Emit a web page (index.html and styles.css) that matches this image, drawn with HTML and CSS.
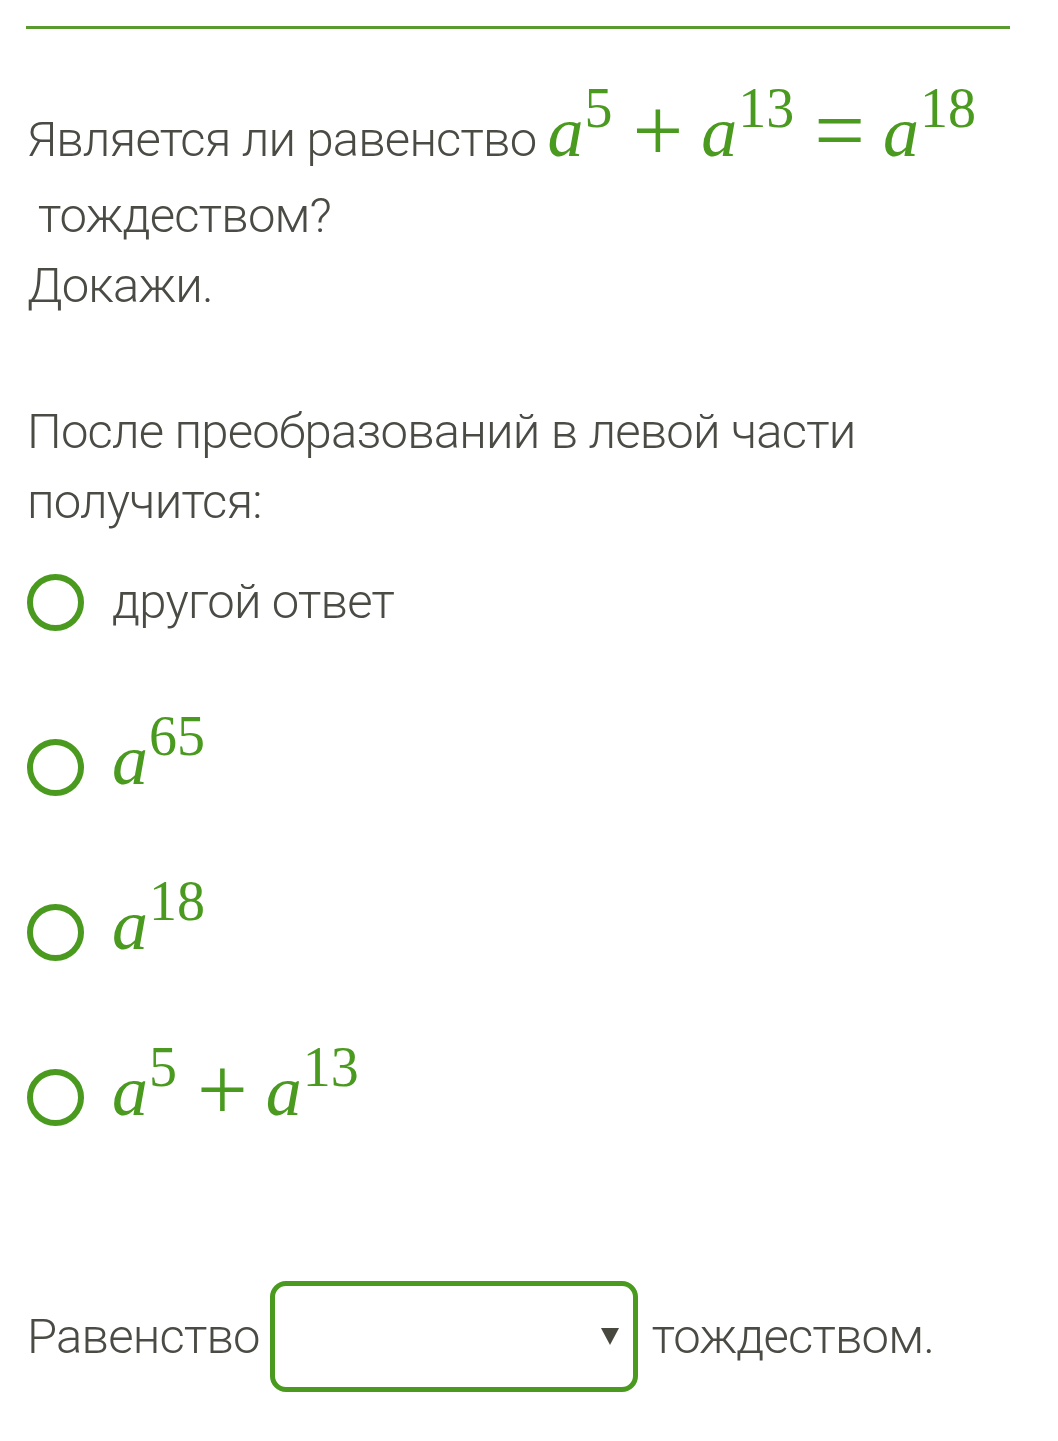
FILE: index.html
```html
<!DOCTYPE html>
<html lang="ru">
<head>
<meta charset="utf-8">
<link rel="stylesheet" href="styles.css">
</head>
<body>
<div class="page">
  <div class="rule"></div>
  <div class="question">
    <p class="q-line q-first">Является ли равенство <span class="math"><i>a</i><sup>5</sup><span class="op">+</span><i>a</i><sup>13</sup><span class="op">=</span><i>a</i><sup>18</sup></span></p>
    <p class="q-line q-indent">тождеством?</p>
    <p class="q-line">Докажи.</p>
  </div>
  <p class="prompt">После преобразований в левой части получится:</p>
  <ul class="options">
    <li class="option"><span class="radio"></span><span class="opt-text">другой ответ</span></li>
    <li class="option"><span class="radio"></span><span class="math math-block"><i>a</i><sup>65</sup></span></li>
    <li class="option"><span class="radio"></span><span class="math math-block"><i>a</i><sup>18</sup></span></li>
    <li class="option"><span class="radio"></span><span class="math math-block"><i>a</i><sup>5</sup><span class="op">+</span><i>a</i><sup>13</sup></span></li>
  </ul>
  <div class="answer">
    <span class="word">Равенство</span>
    <span class="select"><span class="arrow"></span></span>
    <span class="word">тождеством.</span>
  </div>
</div>
</body>
</html>
```

FILE: styles.css
```css
html, body {
  margin: 0;
  padding: 0;
  background: #ffffff;
}

.page {
  font-family: Roboto, "Noto Sans", sans-serif;
  font-weight: 300;
  color: #4b4b45;
  font-size: 49px;
  letter-spacing: -0.8px;
  padding: 26px 48px 0 27px;
}

.rule {
  height: 3px;
  background: #5a9a2e;
  margin-left: -1px;
}

.question {
  margin-top: 70px;
}

.q-line {
  margin: 0;
  line-height: 70px;
}

.q-first {
  line-height: 82px;
}

.q-indent {
  padding-left: 11px;
}

.math {
  font-family: "Liberation Serif", "DejaVu Serif", serif;
  color: #4a9a1f;
  font-weight: 400;
  font-size: 72px;
  letter-spacing: 0;
  line-height: 0;
  white-space: nowrap;
}

.math i {
  font-style: italic;
}

.math sup {
  font-size: 56px;
  vertical-align: 29px;
  line-height: 0;
  margin-left: 1px;
}

.math .op {
  font-size: 90px;
  vertical-align: -5px;
  margin: 0 18px 0 20px;
}

.math-block {
  display: block;
  line-height: 72px;
  padding-bottom: 14px;
}

.prompt {
  margin: 76px 0 0;
  line-height: 70px;
}

.options {
  list-style: none;
  margin: 25px 0 0;
  padding: 0;
  display: flex;
  flex-direction: column;
  gap: 85px;
}

.option {
  display: flex;
  align-items: center;
  gap: 28px;
  height: 80px;
}

.radio {
  flex: none;
  width: 45px;
  height: 45px;
  border: 6px solid #4a9a1f;
  border-radius: 50%;
  box-sizing: content-box;
}

.opt-text {
  line-height: 70px;
}

.answer {
  display: flex;
  align-items: center;
  margin-top: 144px;
}

.select {
  position: relative;
  display: block;
  width: 358px;
  height: 101px;
  border: 5px solid #4a9a1f;
  border-radius: 16px;
  margin: 0 14px 0 10px;
  box-sizing: content-box;
}

.arrow {
  position: absolute;
  right: 14px;
  top: 42px;
  width: 0;
  height: 0;
  border-left: 9.5px solid transparent;
  border-right: 9.5px solid transparent;
  border-top: 17px solid #48483f;
}
```
